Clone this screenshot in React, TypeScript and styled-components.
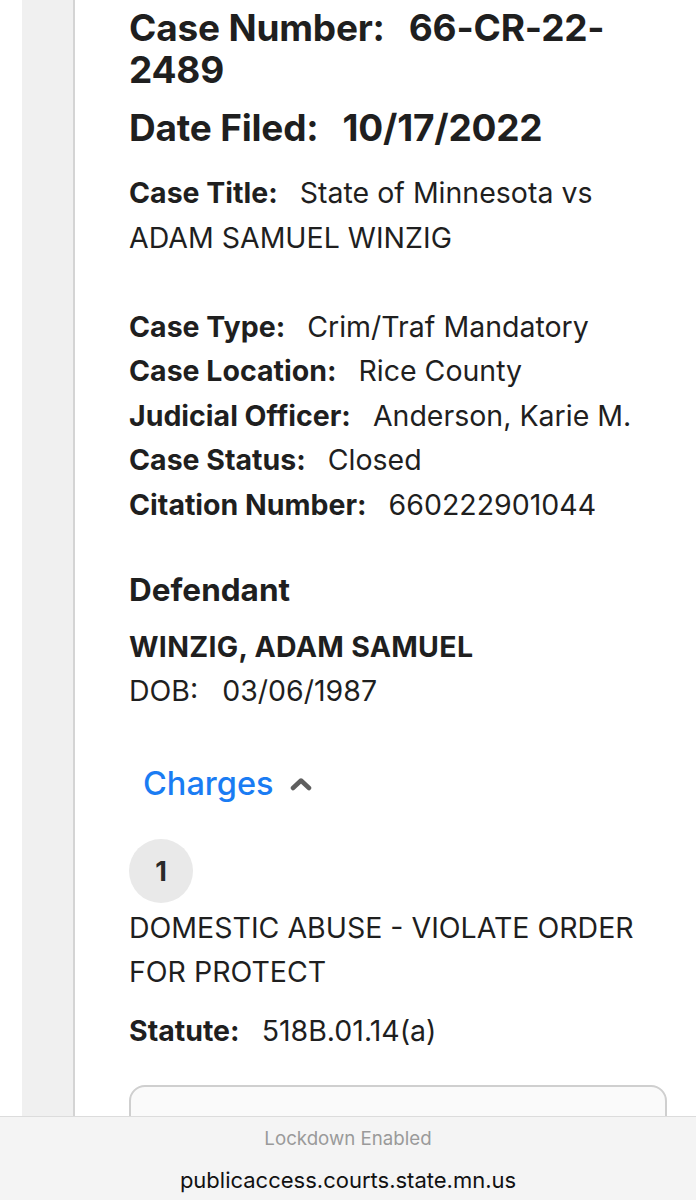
import React from "react";
import styled, { createGlobalStyle } from "styled-components";

const Global = createGlobalStyle`
  html, body { margin: 0; padding: 0; background: #ffffff; }
  body { font-family: Inter, "Noto Sans", "Liberation Sans", sans-serif; color: #1d1d1f; -webkit-font-smoothing: antialiased; }
`;

const Page = styled.div`
  position: relative;
  width: 696px;
  height: 1200px;
  overflow: hidden;
  display: flex;
  background: #ffffff;
`;

const Gutter = styled.div`
  width: 22px;
  flex: none;
  background: #ffffff;
`;

const SideStrip = styled.div`
  width: 51px;
  flex: none;
  background: #f0f0f0;
  border-right: 2px solid #d4d4d4;
`;

const Content = styled.main`
  flex: 1;
  padding: 7px 29px 0 54px;
  display: flex;
  flex-direction: column;
  & > * { flex-shrink: 0; }
`;

const Headline = styled.h1<{ $top?: number }>`
  margin: ${(p) => p.$top ?? 0}px 0 0;
  font-size: 37px;
  line-height: 42px;
  font-weight: 700;
  color: #1f1f1f;
  letter-spacing: -0.2px;
`;

const HeadValue = styled.span`
  margin-left: 24px;
`;

const InfoBlock = styled.div<{ $top: number }>`
  margin-top: ${(p) => p.$top}px;
  font-size: 28.5px;
  line-height: 44.5px;
  color: #1f1f1f;
`;

const Label = styled.span`
  font-weight: 700;
  margin-right: 22px;
`;

const Line = styled.div``;

const Spacer = styled.div`
  height: 44.5px;
`;

const SectionTitle = styled.h2`
  margin: 43px 0 0;
  font-size: 31.5px;
  line-height: 40px;
  font-weight: 700;
  color: #1f1f1f;
`;

const PartyName = styled.div`
  margin-top: 17px;
  font-size: 28.5px;
  line-height: 40px;
  font-weight: 700;
  letter-spacing: 0.3px;
  color: #1f1f1f;
`;

const PlainLine = styled.div`
  margin-top: 2px;
  font-size: 28.5px;
  line-height: 44px;
  color: #1f1f1f;
`;

const DobValue = styled.span`
  margin-left: 24px;
`;

const ToggleButton = styled.button`
  margin: 51px 0 0;
  padding: 0 14px;
  border: 0;
  background: transparent;
  display: flex;
  align-items: center;
  gap: 16px;
  align-self: flex-start;
  font-family: inherit;
  font-size: 32.5px;
  line-height: 40px;
  font-weight: 500;
  color: #1a7cf3;
`;

const CountBadge = styled.div`
  margin-top: 35px;
  width: 64px;
  height: 64px;
  border-radius: 50%;
  background: #e9e9e9;
  display: flex;
  align-items: center;
  justify-content: center;
  font-size: 27px;
  font-weight: 700;
  color: #2a2a2a;
`;

const ChargeText = styled.div`
  margin-top: 3px;
  font-size: 28.5px;
  line-height: 44px;
  color: #1f1f1f;
`;

const Card = styled.div`
  margin-top: 31px;
  height: 140px;
  border: 2px solid #cfcfcf;
  border-radius: 16px;
  background: #fafafa;
`;

const BottomBar = styled.footer`
  position: absolute;
  left: 0;
  right: 0;
  bottom: 0;
  height: 83px;
  background: #f4f4f4;
  border-top: 1px solid #dcdcdc;
  display: flex;
  flex-direction: column;
  align-items: center;
`;

const Lockdown = styled.div`
  margin-top: 10px;
  font-size: 18.7px;
  line-height: 24px;
  color: #9a9a9a;
`;

const Url = styled.div`
  margin-top: 15px;
  font-size: 22px;
  line-height: 28px;
  color: #111111;
`;

const Chevron = () => (
  <svg width="22" height="14" viewBox="0 0 22 14" aria-hidden>
    <path d="M3 11 L11 3.5 L19 11" fill="none" stroke="#5f5f5f" strokeWidth="4.5" strokeLinecap="round" strokeLinejoin="round" />
  </svg>
);

const details: [string, string][] = [
  ["Case Type:", "Crim/Traf Mandatory"],
  ["Case Location:", "Rice County"],
  ["Judicial Officer:", "Anderson, Karie M."],
  ["Case Status:", "Closed"],
  ["Citation Number:", "660222901044"],
];

export default function App() {
  return (
    <>
      <Global />
      <Page>
        <Gutter />
        <SideStrip />
        <Content>
          <Headline>
            Case Number:<HeadValue>66-CR-22-2489</HeadValue>
          </Headline>
          <Headline $top={16}>
            Date Filed:<HeadValue>10/17/2022</HeadValue>
          </Headline>
          <InfoBlock $top={22}>
            <Line>
              <Label>Case Title:</Label>State of Minnesota vs ADAM SAMUEL WINZIG
            </Line>
            <Spacer />
            {details.map(([k, v]) => (
              <Line key={k}>
                <Label>{k}</Label>
                {v}
              </Line>
            ))}
          </InfoBlock>
          <SectionTitle>Defendant</SectionTitle>
          <PartyName>WINZIG, ADAM SAMUEL</PartyName>
          <PlainLine>
            DOB:<DobValue>03/06/1987</DobValue>
          </PlainLine>
          <ToggleButton>
            Charges
            <Chevron />
          </ToggleButton>
          <CountBadge>1</CountBadge>
          <ChargeText>DOMESTIC ABUSE - VIOLATE ORDER FOR PROTECT</ChargeText>
          <InfoBlock $top={15}>
            <Line>
              <Label>Statute:</Label>518B.01.14(a)
            </Line>
          </InfoBlock>
          <Card />
        </Content>
        <BottomBar>
          <Lockdown>Lockdown Enabled</Lockdown>
          <Url>publicaccess.courts.state.mn.us</Url>
        </BottomBar>
      </Page>
    </>
  );
}
